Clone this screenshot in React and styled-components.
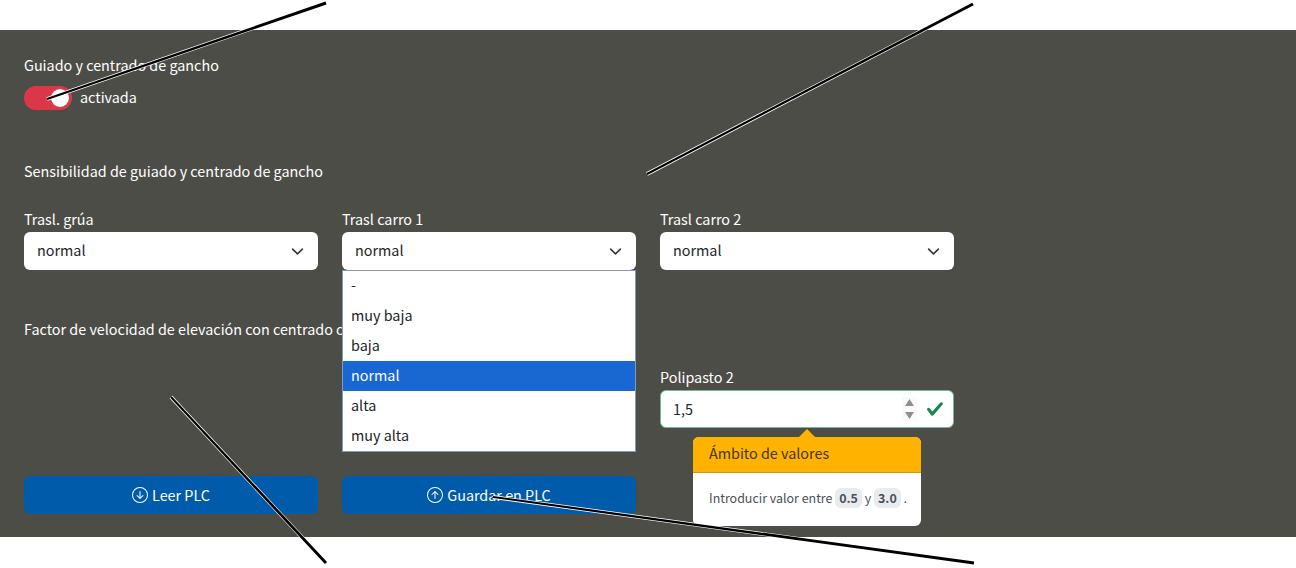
import React from "react";
import styled, { createGlobalStyle } from "styled-components";
import { BsArrowDownCircle, BsArrowUpCircle } from "react-icons/bs";

const GlobalStyle = createGlobalStyle`
  html, body {
    margin: 0;
    padding: 0;
    background: #fff;
  }
  body {
    font-family: "Noto Sans CJK JP", "Noto Sans", sans-serif;
    font-size: 14.36px;
    line-height: 22px;
    color: #212529;
  }
`;

const Page = styled.div`
  position: relative;
  width: 1296px;
  height: 568px;
  padding-top: 30px;
  box-sizing: border-box;
  overflow: hidden;
`;

const Band = styled.main`
  background: #4d4d47;
  height: 507px;
  box-sizing: border-box;
  padding: 24px;
  color: #fff;
`;

const Label = styled.div`
  height: 24px;
  white-space: nowrap;
  color: #fff;
`;

const Heading = styled(Label)`
  margin-top: ${(props) => props.$top}px;
`;

const ToggleRow = styled.div`
  display: flex;
  align-items: flex-start;
  gap: 8px;
  margin-top: 8px;
  height: 24px;
`;

const Toggle = styled.span`
  display: flex;
  align-items: center;
  justify-content: flex-end;
  width: 48px;
  height: 24px;
  padding-right: 3px;
  box-sizing: border-box;
  border-radius: 12px;
  background: #dc3649;
`;

const Knob = styled.span`
  width: 18px;
  height: 18px;
  border-radius: 50%;
  background: #fff;
`;

const FieldGrid = styled.div`
  display: grid;
  grid-template-columns: repeat(3, 294px);
  column-gap: 24px;
  width: 930px;
  margin-top: ${(props) => props.$top}px;
`;

const Field = styled.div`
  position: relative;
  min-height: 62px;
`;

const SelectBox = styled.div`
  display: flex;
  align-items: center;
  justify-content: space-between;
  height: 38px;
  box-sizing: border-box;
  padding: 0 14px 2px 13px;
  background: #fff;
  color: #212529;
  border-radius: 6px;
`;

const Chevron = styled.svg`
  width: 13px;
  height: 13px;
  margin-top: 2px;
  fill: none;
  stroke: #343a40;
  stroke-width: 2;
  stroke-linecap: round;
  stroke-linejoin: round;
`;

const OptionList = styled.ul`
  position: absolute;
  top: 100%;
  left: 0;
  right: 0;
  z-index: 2;
  margin: 0;
  padding: 0;
  list-style: none;
  background: #fff;
  border: 1px solid #7f9db9;
  box-sizing: border-box;
`;

const Option = styled.li`
  height: 30px;
  line-height: 28px;
  padding-left: 8px;
  color: ${(props) => (props.$selected ? "#fff" : "#212529")};
  background: ${(props) => (props.$selected ? "#1967d2" : "#fff")};
`;

const NumberBox = styled.div`
  display: flex;
  align-items: center;
  height: 38px;
  box-sizing: border-box;
  padding: 0 9px 0 12px;
  background: #fff;
  border: 1px solid #75b798;
  border-radius: 6px;
`;

const NumberInput = styled.input`
  flex: 1;
  min-width: 0;
  margin-top: -1px;
  border: 0;
  outline: 0;
  padding: 0;
  background: transparent;
  font: inherit;
  color: #212529;
`;

const Spinner = styled.svg`
  width: 15px;
  height: 24px;
  margin-right: 9px;
  background: #fafafa;
  fill: #8f8f8f;
`;

const Check = styled.svg`
  width: 18px;
  height: 18px;
  fill: #198754;
`;

const Popover = styled.div`
  position: absolute;
  top: calc(100% + 9px);
  left: 33px;
  width: 228px;
  z-index: 2;
  background: #fff;
  border-radius: 6px;
  color: #212529;

  &::before {
    content: "";
    position: absolute;
    top: -8px;
    left: 106px;
    border: 8px solid transparent;
    border-top-width: 0;
    border-bottom-color: #ffb300;
  }
`;

const PopoverHeader = styled.div`
  height: 36px;
  line-height: 32px;
  box-sizing: border-box;
  padding: 0 16px;
  background: #ffb300;
  border-bottom: 1px solid #d99800;
  border-radius: 6px 6px 0 0;
  color: #43381c;
`;

const PopoverBody = styled.div`
  display: flex;
  align-items: center;
  height: 53px;
  padding: 0 16px 3px;
  box-sizing: border-box;
  font-size: 12.45px;
  white-space: pre;
  color: #495057;
`;

const Pill = styled.span`
  display: inline-block;
  padding: 0 4px;
  line-height: 20px;
  border-radius: 6px;
  background: #e9ecef;
  font-weight: 700;
`;

const ActionButton = styled.button`
  display: flex;
  align-items: center;
  justify-content: center;
  gap: 4px;
  height: 38px;
  padding: 0;
  border: 0;
  border-radius: 6px;
  background: #005cab;
  color: #fff;
  font: inherit;
`;

const Annotations = styled.svg`
  position: absolute;
  inset: 0;
  z-index: 5;
  pointer-events: none;
`;

// ends of the drawn pointer lines: from is the thin tip, to the thick end
const pointers = [
  { from: [47, 99], to: [326, 3] },
  { from: [647, 174], to: [973, 4] },
  { from: [171, 397], to: [326, 563] },
  { from: [493, 497], to: [974, 563] },
];

const taper = ({ from, to }, thin, thick) => {
  const dx = to[0] - from[0];
  const dy = to[1] - from[1];
  const len = Math.hypot(dx, dy);
  const nx = -dy / len;
  const ny = dx / len;
  return [
    [from[0] + nx * thin, from[1] + ny * thin],
    [to[0] + nx * thick, to[1] + ny * thick],
    [to[0] - nx * thick, to[1] - ny * thick],
    [from[0] - nx * thin, from[1] - ny * thin],
  ]
    .map((p) => p.join(","))
    .join(" ");
};

const ChevronIcon = () => (
  <Chevron viewBox="0 0 16 16">
    <path d="m2 5 6 6 6-6" />
  </Chevron>
);

const options = ["-", "muy baja", "baja", "normal", "alta", "muy alta"];

const App = () => {
  return (
    <Page>
      <GlobalStyle />
      <Band>
        <Label>Guiado y centrado de gancho</Label>
        <ToggleRow>
          <Toggle>
            <Knob />
          </Toggle>
          activada
        </ToggleRow>

        <Heading $top={50}>Sensibilidad de guiado y centrado de gancho</Heading>
        <FieldGrid $top={24}>
          <Field>
            <Label>Trasl. grúa</Label>
            <SelectBox>
              normal
              <ChevronIcon />
            </SelectBox>
          </Field>
          <Field>
            <Label>Trasl carro 1</Label>
            <SelectBox>
              normal
              <ChevronIcon />
            </SelectBox>
            <OptionList>
              {options.map((option) => (
                <Option key={option} $selected={option === "normal"}>
                  {option}
                </Option>
              ))}
            </OptionList>
          </Field>
          <Field>
            <Label>Trasl carro 2</Label>
            <SelectBox>
              normal
              <ChevronIcon />
            </SelectBox>
          </Field>
        </FieldGrid>

        <Heading $top={48}>Factor de velocidad de elevación con centrado de gancho</Heading>
        <FieldGrid $top={24}>
          <Field />
          <Field />
          <Field>
            <Label>Polipasto 2</Label>
            <NumberBox>
              <NumberInput readOnly value="1,5" />
              <Spinner viewBox="0 0 15 24">
                <path d="M7.5 2 12 9H3z" />
                <path d="M7.5 22 3 15h9z" />
              </Spinner>
              <Check viewBox="0 0 8 8">
                <path d="M2.3 6.73.6 4.53c-.4-1.04.46-1.4 1.1-.8l1.1 1.4 3.4-3.8c.6-.63 1.6-.27 1.2.7l-4 4.6c-.43.5-.8.4-1.1.1z" />
              </Check>
            </NumberBox>
            <Popover>
              <PopoverHeader>Ámbito de valores</PopoverHeader>
              <PopoverBody>
                Introducir valor entre <Pill>0.5</Pill> y <Pill>3.0</Pill> .
              </PopoverBody>
            </Popover>
          </Field>
        </FieldGrid>

        <FieldGrid $top={48}>
          <ActionButton>
            <BsArrowDownCircle size={16} />
            Leer PLC
          </ActionButton>
          <ActionButton>
            <BsArrowUpCircle size={16} />
            Guardar en PLC
          </ActionButton>
        </FieldGrid>
      </Band>
      <Annotations width="1296" height="568" viewBox="0 0 1296 568">
        {pointers.map((pointer) => (
          <g key={pointer.from.join("-")}>
            <polygon points={taper(pointer, 1.9, 1.9)} fill="#fff" />
            <polygon points={taper(pointer, 1, 1.5)} fill="#000" />
          </g>
        ))}
      </Annotations>
    </Page>
  );
};

export default App;
